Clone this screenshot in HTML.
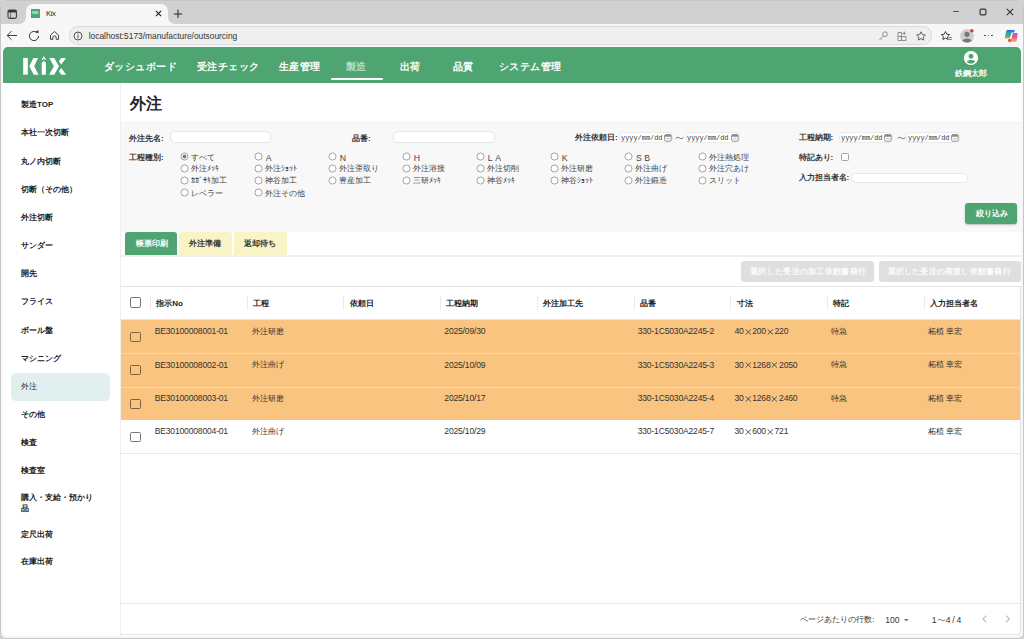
<!DOCTYPE html>
<html><head><meta charset="utf-8">
<style>
*{box-sizing:border-box;margin:0;padding:0}
html,body{width:1024px;height:639px;overflow:hidden;background:#d4d4d4;font-family:"Liberation Sans",sans-serif;position:relative}
.a{position:absolute}
.t{position:absolute;white-space:nowrap}
svg{display:block}
</style></head><body>
<div class="a" style="left:0px;top:0px;width:1024px;height:639px;background:#f7f7f7;border-radius:7px 7px 6px 6px;border:1px solid #c6c6c6"></div>
<div class="a" style="left:1px;top:1px;width:1022px;height:23px;background:#d1d1d1;border-radius:6px 6px 0 0"></div>
<div class="a" style="left:26px;top:4px;width:142px;height:20px;background:#f7f7f7;border-radius:7px 7px 0 0"></div>
<svg class="a" style="left:18px;top:16px" width="160" height="8"><path d="M0 8 Q8 8 8 0 L8 8Z M150 0 Q150 8 158 8 L150 8Z" fill="#f7f7f7"/></svg>
<svg class="a" style="left:7px;top:8.6px" width="10.5" height="10.5"><rect x="1" y="1" width="8.4" height="8.4" rx="1.6" fill="none" stroke="#3a3a3a" stroke-width="1.1"/><rect x="1" y="1" width="8.4" height="2.6" rx="1" fill="#3a3a3a"/><line x1="3.6" y1="3.4" x2="3.6" y2="9.4" stroke="#555" stroke-width="0.8"/></svg>
<div class="a" style="left:30.5px;top:8.9px;width:9.5px;height:9.1px;background:#4ea571"></div>
<div class="t" style="left:30.5px;top:11px;width:9.5px;font-size:3.6px;line-height:5px;color:#e8f5ec;text-align:center;font-weight:bold">KIX</div>
<div class="t" style="left:46px;top:8.60px;font-size:7.6px;line-height:10px;font-weight:normal;color:#222;letter-spacing:-0.35px">Kix</div>
<svg class="a" style="left:154.8px;top:10px" width="7" height="7"><path d="M0.9 0.9L6.1 6.1M6.1 0.9L0.9 6.1" stroke="#222" stroke-width="1.2"/></svg>
<svg class="a" style="left:172.5px;top:8.5px" width="10" height="10"><path d="M5 0.5V9M0.8 5H9.2" stroke="#222" stroke-width="1"/></svg>
<div class="a" style="left:953.3px;top:11.2px;width:5.400000000000091px;height:1.3000000000000007px;background:#555"></div>
<svg class="a" style="left:979px;top:8px" width="8" height="8"><rect x="1.1" y="1.1" width="5.8" height="5.8" rx="1.2" fill="none" stroke="#333" stroke-width="1.2"/></svg>
<svg class="a" style="left:1005.8px;top:8px" width="8" height="8"><path d="M0.8 0.8L7.2 7.2M7.2 0.8L0.8 7.2" stroke="#333" stroke-width="1.1"/></svg>
<svg class="a" style="left:5px;top:29px" width="14" height="14"><path d="M12 6.5H2.2M6.6 2.1L2.2 6.5L6.6 10.9" fill="none" stroke="#333" stroke-width="0.95"/></svg>
<svg class="a" style="left:26.5px;top:28.6px" width="14" height="14"><path d="M11.6 7A4.6 4.6 0 1 1 10.2 3.7" fill="none" stroke="#333" stroke-width="1"/><path d="M8 3.2L11.6 3.9L11.4 0.9Z" fill="#333"/></svg>
<svg class="a" style="left:47px;top:28px" width="14" height="14"><path d="M3.5 7.2L7.5 3.4L11.5 7.2V11.3H9.1V9.3Q9.1 7.9 7.5 7.9Q5.9 7.9 5.9 9.3V11.3H3.5Z" fill="none" stroke="#333" stroke-width="0.95" stroke-linejoin="round"/></svg>
<div class="a" style="left:69px;top:26px;width:863px;height:19px;background:#efefef;border:1px solid #dadada;border-radius:9px"></div>
<svg class="a" style="left:73px;top:30.5px" width="10" height="10"><circle cx="5" cy="5" r="4" fill="none" stroke="#555" stroke-width="1"/><line x1="5" y1="4" x2="5" y2="7.5" stroke="#555" stroke-width="1"/><circle cx="5" cy="2.7" r="0.6" fill="#555"/></svg>
<div class="t" style="left:88.7px;top:31.40px;font-size:8.4px;line-height:10px;font-weight:normal;color:#333;">localhost:5173/manufacture/outsourcing</div>
<svg class="a" style="left:877px;top:30px" width="12" height="12"><circle cx="8" cy="4.2" r="2.4" fill="none" stroke="#888" stroke-width="0.9"/><path d="M6.3 5.9L2.5 9.7M3.6 8.6L4.7 9.7" fill="none" stroke="#888" stroke-width="0.9"/></svg>
<svg class="a" style="left:896px;top:29.5px" width="13" height="13"><path d="M2 2.5H5.5V10.5H2ZM5.5 6.5H10V10.5H5.5ZM2 6.5H5.5" fill="none" stroke="#808080" stroke-width="0.85"/><path d="M8.2 1.5V5M6.6 3.3H9.8" stroke="#808080" stroke-width="0.85"/></svg>
<svg class="a" style="left:913.5px;top:29.5px" width="14" height="12"><path d="M7 1.8L8.35 4.6L11.4 5L9.15 7.1L9.75 10.1L7 8.6L4.25 10.1L4.85 7.1L2.6 5L5.65 4.6Z" fill="none" stroke="#555" stroke-width="0.9" stroke-linejoin="round"/></svg>
<svg class="a" style="left:940px;top:29.5px" width="13" height="12"><path d="M5.5 1.5L6.8 4.2L9.7 4.6L7.6 6.6L8.1 9.5L5.5 8.1L2.9 9.5L3.4 6.6L1.3 4.6L4.2 4.2Z" fill="none" stroke="#333" stroke-width="0.95" stroke-linejoin="round"/><path d="M8.8 7.6H11.8M8.8 9.4H11.8" stroke="#666" stroke-width="0.9"/></svg>
<svg class="a" style="left:959px;top:28px" width="16" height="16"><circle cx="8" cy="8" r="7" fill="#cfcfcf"/><circle cx="8" cy="6.3" r="2.6" fill="#777"/><path d="M3.2 12.6A5.5 4 0 0 1 12.8 12.6A7 7 0 0 1 3.2 12.6Z" fill="#777"/><circle cx="12.8" cy="2.8" r="1.8" fill="#e53935"/></svg>
<div class="a" style="left:984.2px;top:34.6px;width:1.7999999999999545px;height:1.7999999999999972px;background:#444;border-radius:0.6px"></div>
<div class="a" style="left:987.6px;top:34.6px;width:1.7999999999999545px;height:1.7999999999999972px;background:#444;border-radius:0.6px"></div>
<div class="a" style="left:991px;top:34.6px;width:1.7999999999999545px;height:1.7999999999999972px;background:#444;border-radius:0.6px"></div>
<svg class="a" style="left:1003.5px;top:29px" width="15" height="14"><defs><linearGradient id="cg1" x1="0" y1="0" x2="0" y2="1"><stop offset="0" stop-color="#2563e0"/><stop offset="0.35" stop-color="#2fa0c8"/><stop offset="0.7" stop-color="#4bb464"/><stop offset="1" stop-color="#d2c21c"/></linearGradient><linearGradient id="cg2" x1="0" y1="0" x2="0" y2="1"><stop offset="0" stop-color="#c44fd0"/><stop offset="0.55" stop-color="#e0609a"/><stop offset="0.75" stop-color="#f7915a"/><stop offset="1" stop-color="#f8a058"/></linearGradient></defs><path d="M3.4 0.9H9.6Q11 0.9 10.6 2.2L10.2 3.4H7.6L5.8 9.6H1.8Q0.6 9.6 0.8 8.4L2.3 2Q2.6 0.9 3.4 0.9Z" fill="url(#cg1)"/><path d="M11.6 12.7H5.2Q4 12.7 4.3 11.5L4.6 10.2H7.3L8.9 4.1H12.6Q13.8 4.1 13.6 5.3L12.7 11.5Q12.5 12.7 11.6 12.7Z" fill="url(#cg2)"/><circle cx="5.6" cy="11.4" r="1.4" fill="#e53d3a"/></svg>
<div class="a" style="left:3px;top:47px;width:1018px;height:588.5px;background:#fff;border-radius:5px 5px 5px 5px;overflow:hidden"></div>
<div class="a" style="left:3px;top:47px;width:1018px;height:35.5px;background:#4ea571;border-radius:5px 5px 0 0"></div>
<svg class="a" style="left:20px;top:52px" width="50" height="26"><g fill="#fff"><rect x="3.2" y="5.9" width="4.6" height="16.8"/><path d="M13.4 5.9H18.1L14.2 14.3L18.6 22.7H13.7L9.3 14.3Z"/><path d="M21.7 22.7V10.4L23.8 9L25.9 10.4V22.7Z"/><path d="M21.5 8L23.8 3.9L26.1 8H24.8L23.8 6.2L22.8 8Z"/><path d="M29.3 5.9H34.2L39 14.3L34.2 22.7H29.1L33.9 14.3Z"/><path d="M41 5.9H45.9L41.3 12.5L38.9 9.5Z"/><path d="M38.9 19.1L41.3 16.1L46.1 22.7H41.2Z"/></g></svg>
<div class="t" style="left:104px;top:60.00px;font-size:10.4px;line-height:13px;font-weight:bold;color:#fff;letter-spacing:0.45px">ダッシュボード</div>
<div class="t" style="left:197px;top:60.00px;font-size:10.4px;line-height:13px;font-weight:bold;color:#fff;letter-spacing:0.45px">受注チェック</div>
<div class="t" style="left:279px;top:60.00px;font-size:10.4px;line-height:13px;font-weight:bold;color:#fff;letter-spacing:0.45px">生産管理</div>
<div class="t" style="left:346px;top:60.00px;font-size:10.4px;line-height:13px;font-weight:bold;color:#b8dcc3;letter-spacing:0.45px">製造</div>
<div class="t" style="left:400px;top:60.00px;font-size:10.4px;line-height:13px;font-weight:bold;color:#fff;letter-spacing:0.45px">出荷</div>
<div class="t" style="left:453px;top:60.00px;font-size:10.4px;line-height:13px;font-weight:bold;color:#fff;letter-spacing:0.45px">品質</div>
<div class="t" style="left:499px;top:60.00px;font-size:10.4px;line-height:13px;font-weight:bold;color:#fff;letter-spacing:0.45px">システム管理</div>
<div class="a" style="left:330.5px;top:78px;width:52.5px;height:1.5999999999999943px;background:#fff;border-radius:1px"></div>
<svg class="a" style="left:961.8px;top:49.2px" width="18" height="18" viewBox="0 0 24 24"><g transform="translate(12 12) scale(0.94) translate(-12 -12)"><path fill="#fff" d="M12 2C6.48 2 2 6.48 2 12s4.48 10 10 10 10-4.48 10-10S17.52 2 12 2zm0 4c1.93 0 3.5 1.57 3.5 3.5S13.93 13 12 13s-3.5-1.57-3.5-3.5S10.07 6 12 6zm0 14c-2.03 0-4.43-.82-6.14-2.88C7.55 15.8 9.68 15 12 15s4.45.8 6.14 2.12C16.43 19.18 14.03 20 12 20z"/></g></svg>
<div class="t" style="left:954.5px;top:68.70px;font-size:8px;line-height:10px;font-weight:bold;color:#fff;">鉄鋼太郎</div>
<div class="a" style="left:119.8px;top:82.5px;width:1.4000000000000057px;height:553.0px;background:#eeeeee"></div>
<div class="t" style="left:21px;top:100.30px;font-size:8px;line-height:10px;font-weight:bold;color:#222;">製造TOP</div>
<div class="t" style="left:21px;top:128.45px;font-size:8px;line-height:10px;font-weight:bold;color:#222;">本社一次切断</div>
<div class="t" style="left:21px;top:156.60px;font-size:8px;line-height:10px;font-weight:bold;color:#222;">丸ノ内切断</div>
<div class="t" style="left:21px;top:184.75px;font-size:8px;line-height:10px;font-weight:bold;color:#222;">切断（その他）</div>
<div class="t" style="left:21px;top:212.90px;font-size:8px;line-height:10px;font-weight:bold;color:#222;">外注切断</div>
<div class="t" style="left:21px;top:241.05px;font-size:8px;line-height:10px;font-weight:bold;color:#222;">サンダー</div>
<div class="t" style="left:21px;top:269.20px;font-size:8px;line-height:10px;font-weight:bold;color:#222;">開先</div>
<div class="t" style="left:21px;top:297.35px;font-size:8px;line-height:10px;font-weight:bold;color:#222;">フライス</div>
<div class="t" style="left:21px;top:325.50px;font-size:8px;line-height:10px;font-weight:bold;color:#222;">ボール盤</div>
<div class="t" style="left:21px;top:353.65px;font-size:8px;line-height:10px;font-weight:bold;color:#222;">マシニング</div>
<div class="a" style="left:11.3px;top:372.5px;width:99.0px;height:28.19999999999999px;background:#e2efef;border-radius:5px"></div>
<div class="t" style="left:21px;top:381.80px;font-size:8px;line-height:10px;font-weight:normal;color:#1e1e1e;">外注</div>
<div class="t" style="left:21px;top:409.95px;font-size:8px;line-height:10px;font-weight:bold;color:#222;">その他</div>
<div class="t" style="left:21px;top:438.10px;font-size:8px;line-height:10px;font-weight:bold;color:#222;">検査</div>
<div class="t" style="left:21px;top:466.25px;font-size:8px;line-height:10px;font-weight:bold;color:#222;">検査室</div>
<div class="t" style="left:21px;top:492.80px;font-size:8px;line-height:10px;font-weight:bold;color:#222;">購入・支給・預かり</div>
<div class="t" style="left:21px;top:504.00px;font-size:8px;line-height:10px;font-weight:bold;color:#222;">品</div>
<div class="t" style="left:21px;top:529.60px;font-size:8px;line-height:10px;font-weight:bold;color:#222;">定尺出荷</div>
<div class="t" style="left:21px;top:557.40px;font-size:8px;line-height:10px;font-weight:bold;color:#222;">在庫出荷</div>
<div class="t" style="left:129.7px;top:94.40px;font-size:16px;line-height:20px;font-weight:bold;color:#262626;">外注</div>
<div class="a" style="left:121px;top:122px;width:900px;height:110.19999999999999px;background:#f8f8f8;border-top:1.6px solid #f0f0f0"></div>
<div class="t" style="left:129px;top:133.80px;font-size:8px;line-height:10px;font-weight:bold;color:#333;">外注先名:</div>
<div class="a" style="left:170px;top:131.4px;width:101.19999999999999px;height:11.400000000000006px;background:#fff;border:1px solid #e6e6e6;border-radius:4.5px"></div>
<div class="t" style="left:352px;top:133.80px;font-size:8px;line-height:10px;font-weight:bold;color:#333;">品番:</div>
<div class="a" style="left:393px;top:131.4px;width:101.69999999999999px;height:11.400000000000006px;background:#fff;border:1px solid #e6e6e6;border-radius:4.5px"></div>
<div class="t" style="left:575px;top:133.20px;font-size:8px;line-height:10px;font-weight:bold;color:#333;">外注依頼日:</div>
<div class="a" style="left:619px;top:132.4px;width:54px;height:10.699999999999989px;background:#fff;border:1px solid #ebebeb;border-radius:4px"></div>
<div class="t" style="left:620.8px;top:134.1px;font-family:'Liberation Mono',monospace;font-size:7.6px;line-height:9px;color:#333;transform:scaleX(0.91);transform-origin:0 0">yyyy/mm/dd</div>
<svg class="a" style="left:664px;top:133.5px" width="8" height="8"><rect x="0.6" y="0.6" width="6.6" height="6.6" rx="1.3" fill="none" stroke="#8a8a8a" stroke-width="0.9"/><rect x="0.6" y="0.6" width="6.6" height="2.2" rx="1" fill="#8a8a8a"/><rect x="2" y="4.4" width="3.8" height="0.8" fill="#aaa"/></svg>
<svg class="a" style="left:675px;top:135px" width="9" height="6"><path d="M0.7 3.5C1.9 2.1 3.2 2.1 4.5 3C5.8 3.9 7.1 3.9 8.3 2.5" fill="none" stroke="#444" stroke-width="0.8"/></svg>
<div class="a" style="left:685.5px;top:132.4px;width:54.0px;height:10.699999999999989px;background:#fff;border:1px solid #ebebeb;border-radius:4px"></div>
<div class="t" style="left:687.3px;top:134.1px;font-family:'Liberation Mono',monospace;font-size:7.6px;line-height:9px;color:#333;transform:scaleX(0.91);transform-origin:0 0">yyyy/mm/dd</div>
<svg class="a" style="left:730.5px;top:133.5px" width="8" height="8"><rect x="0.6" y="0.6" width="6.6" height="6.6" rx="1.3" fill="none" stroke="#8a8a8a" stroke-width="0.9"/><rect x="0.6" y="0.6" width="6.6" height="2.2" rx="1" fill="#8a8a8a"/><rect x="2" y="4.4" width="3.8" height="0.8" fill="#aaa"/></svg>
<div class="t" style="left:798.6px;top:133.20px;font-size:8px;line-height:10px;font-weight:bold;color:#333;">工程納期:</div>
<div class="a" style="left:839px;top:132.4px;width:54px;height:10.699999999999989px;background:#fff;border:1px solid #ebebeb;border-radius:4px"></div>
<div class="t" style="left:840.8px;top:134.1px;font-family:'Liberation Mono',monospace;font-size:7.6px;line-height:9px;color:#333;transform:scaleX(0.91);transform-origin:0 0">yyyy/mm/dd</div>
<svg class="a" style="left:884px;top:133.5px" width="8" height="8"><rect x="0.6" y="0.6" width="6.6" height="6.6" rx="1.3" fill="none" stroke="#8a8a8a" stroke-width="0.9"/><rect x="0.6" y="0.6" width="6.6" height="2.2" rx="1" fill="#8a8a8a"/><rect x="2" y="4.4" width="3.8" height="0.8" fill="#aaa"/></svg>
<svg class="a" style="left:897px;top:135px" width="9" height="6"><path d="M0.7 3.5C1.9 2.1 3.2 2.1 4.5 3C5.8 3.9 7.1 3.9 8.3 2.5" fill="none" stroke="#444" stroke-width="0.8"/></svg>
<div class="a" style="left:906px;top:132.4px;width:54px;height:10.699999999999989px;background:#fff;border:1px solid #ebebeb;border-radius:4px"></div>
<div class="t" style="left:907.8px;top:134.1px;font-family:'Liberation Mono',monospace;font-size:7.6px;line-height:9px;color:#333;transform:scaleX(0.91);transform-origin:0 0">yyyy/mm/dd</div>
<svg class="a" style="left:951px;top:133.5px" width="8" height="8"><rect x="0.6" y="0.6" width="6.6" height="6.6" rx="1.3" fill="none" stroke="#8a8a8a" stroke-width="0.9"/><rect x="0.6" y="0.6" width="6.6" height="2.2" rx="1" fill="#8a8a8a"/><rect x="2" y="4.4" width="3.8" height="0.8" fill="#aaa"/></svg>
<div class="t" style="left:129px;top:153.00px;font-size:8px;line-height:10px;font-weight:bold;color:#333;">工程種別:</div>
<svg class="a" style="left:179.90px;top:152.30px" width="9" height="9"><circle cx="4.5" cy="4.5" r="3.55" fill="#fff" stroke="#9a9a9a" stroke-width="0.9"/><circle cx="4.5" cy="4.5" r="1.9" fill="#777"/></svg>
<div class="t" style="left:190.6px;top:152.60px;font-size:8px;line-height:10px;font-weight:normal;color:#444;">すべて</div>
<svg class="a" style="left:253.95px;top:152.30px" width="9" height="9"><circle cx="4.5" cy="4.5" r="3.55" fill="#fff" stroke="#9a9a9a" stroke-width="0.9"/></svg>
<div class="t" style="left:265.65px;top:153.00px;font-size:8.7px;line-height:10px;font-weight:normal;color:#444;letter-spacing:2.6px">A</div>
<svg class="a" style="left:328.00px;top:152.30px" width="9" height="9"><circle cx="4.5" cy="4.5" r="3.55" fill="#fff" stroke="#9a9a9a" stroke-width="0.9"/></svg>
<div class="t" style="left:339.7px;top:153.00px;font-size:8.7px;line-height:10px;font-weight:normal;color:#444;letter-spacing:2.6px">N</div>
<svg class="a" style="left:402.05px;top:152.30px" width="9" height="9"><circle cx="4.5" cy="4.5" r="3.55" fill="#fff" stroke="#9a9a9a" stroke-width="0.9"/></svg>
<div class="t" style="left:413.74999999999994px;top:153.00px;font-size:8.7px;line-height:10px;font-weight:normal;color:#444;letter-spacing:2.6px">H</div>
<svg class="a" style="left:476.10px;top:152.30px" width="9" height="9"><circle cx="4.5" cy="4.5" r="3.55" fill="#fff" stroke="#9a9a9a" stroke-width="0.9"/></svg>
<div class="t" style="left:487.8px;top:153.00px;font-size:8.7px;line-height:10px;font-weight:normal;color:#444;letter-spacing:2.6px">LA</div>
<svg class="a" style="left:550.15px;top:152.30px" width="9" height="9"><circle cx="4.5" cy="4.5" r="3.55" fill="#fff" stroke="#9a9a9a" stroke-width="0.9"/></svg>
<div class="t" style="left:561.85px;top:153.00px;font-size:8.7px;line-height:10px;font-weight:normal;color:#444;letter-spacing:2.6px">K</div>
<svg class="a" style="left:624.20px;top:152.30px" width="9" height="9"><circle cx="4.5" cy="4.5" r="3.55" fill="#fff" stroke="#9a9a9a" stroke-width="0.9"/></svg>
<div class="t" style="left:635.9px;top:153.00px;font-size:8.7px;line-height:10px;font-weight:normal;color:#444;letter-spacing:2.6px">SB</div>
<svg class="a" style="left:698.25px;top:152.30px" width="9" height="9"><circle cx="4.5" cy="4.5" r="3.55" fill="#fff" stroke="#9a9a9a" stroke-width="0.9"/></svg>
<div class="t" style="left:708.95px;top:152.60px;font-size:8px;line-height:10px;font-weight:normal;color:#444;">外注熱処理</div>
<svg class="a" style="left:179.90px;top:164.00px" width="9" height="9"><circle cx="4.5" cy="4.5" r="3.55" fill="#fff" stroke="#9a9a9a" stroke-width="0.9"/></svg>
<div class="t" style="left:190.6px;top:164.30px;font-size:8px;line-height:10px;font-weight:normal;color:#444;">外注ﾒｯｷ</div>
<svg class="a" style="left:253.95px;top:164.00px" width="9" height="9"><circle cx="4.5" cy="4.5" r="3.55" fill="#fff" stroke="#9a9a9a" stroke-width="0.9"/></svg>
<div class="t" style="left:264.65px;top:164.30px;font-size:8px;line-height:10px;font-weight:normal;color:#444;">外注ｼｮｯﾄ</div>
<svg class="a" style="left:328.00px;top:164.00px" width="9" height="9"><circle cx="4.5" cy="4.5" r="3.55" fill="#fff" stroke="#9a9a9a" stroke-width="0.9"/></svg>
<div class="t" style="left:338.7px;top:164.30px;font-size:8px;line-height:10px;font-weight:normal;color:#444;">外注歪取り</div>
<svg class="a" style="left:402.05px;top:164.00px" width="9" height="9"><circle cx="4.5" cy="4.5" r="3.55" fill="#fff" stroke="#9a9a9a" stroke-width="0.9"/></svg>
<div class="t" style="left:412.74999999999994px;top:164.30px;font-size:8px;line-height:10px;font-weight:normal;color:#444;">外注溶接</div>
<svg class="a" style="left:476.10px;top:164.00px" width="9" height="9"><circle cx="4.5" cy="4.5" r="3.55" fill="#fff" stroke="#9a9a9a" stroke-width="0.9"/></svg>
<div class="t" style="left:486.8px;top:164.30px;font-size:8px;line-height:10px;font-weight:normal;color:#444;">外注切削</div>
<svg class="a" style="left:550.15px;top:164.00px" width="9" height="9"><circle cx="4.5" cy="4.5" r="3.55" fill="#fff" stroke="#9a9a9a" stroke-width="0.9"/></svg>
<div class="t" style="left:560.85px;top:164.30px;font-size:8px;line-height:10px;font-weight:normal;color:#444;">外注研磨</div>
<svg class="a" style="left:624.20px;top:164.00px" width="9" height="9"><circle cx="4.5" cy="4.5" r="3.55" fill="#fff" stroke="#9a9a9a" stroke-width="0.9"/></svg>
<div class="t" style="left:634.9px;top:164.30px;font-size:8px;line-height:10px;font-weight:normal;color:#444;">外注曲げ</div>
<svg class="a" style="left:698.25px;top:164.00px" width="9" height="9"><circle cx="4.5" cy="4.5" r="3.55" fill="#fff" stroke="#9a9a9a" stroke-width="0.9"/></svg>
<div class="t" style="left:708.95px;top:164.30px;font-size:8px;line-height:10px;font-weight:normal;color:#444;">外注穴あけ</div>
<svg class="a" style="left:179.90px;top:175.80px" width="9" height="9"><circle cx="4.5" cy="4.5" r="3.55" fill="#fff" stroke="#9a9a9a" stroke-width="0.9"/></svg>
<div class="t" style="left:190.6px;top:176.10px;font-size:8px;line-height:10px;font-weight:normal;color:#444;">ｶｶﾞｻｷ加工</div>
<svg class="a" style="left:253.95px;top:175.80px" width="9" height="9"><circle cx="4.5" cy="4.5" r="3.55" fill="#fff" stroke="#9a9a9a" stroke-width="0.9"/></svg>
<div class="t" style="left:264.65px;top:176.10px;font-size:8px;line-height:10px;font-weight:normal;color:#444;">神谷加工</div>
<svg class="a" style="left:328.00px;top:175.80px" width="9" height="9"><circle cx="4.5" cy="4.5" r="3.55" fill="#fff" stroke="#9a9a9a" stroke-width="0.9"/></svg>
<div class="t" style="left:338.7px;top:176.10px;font-size:8px;line-height:10px;font-weight:normal;color:#444;">豊産加工</div>
<svg class="a" style="left:402.05px;top:175.80px" width="9" height="9"><circle cx="4.5" cy="4.5" r="3.55" fill="#fff" stroke="#9a9a9a" stroke-width="0.9"/></svg>
<div class="t" style="left:412.74999999999994px;top:176.10px;font-size:8px;line-height:10px;font-weight:normal;color:#444;">三研ﾒｯｷ</div>
<svg class="a" style="left:476.10px;top:175.80px" width="9" height="9"><circle cx="4.5" cy="4.5" r="3.55" fill="#fff" stroke="#9a9a9a" stroke-width="0.9"/></svg>
<div class="t" style="left:486.8px;top:176.10px;font-size:8px;line-height:10px;font-weight:normal;color:#444;">神谷ﾒｯｷ</div>
<svg class="a" style="left:550.15px;top:175.80px" width="9" height="9"><circle cx="4.5" cy="4.5" r="3.55" fill="#fff" stroke="#9a9a9a" stroke-width="0.9"/></svg>
<div class="t" style="left:560.85px;top:176.10px;font-size:8px;line-height:10px;font-weight:normal;color:#444;">神谷ｼｮｯﾄ</div>
<svg class="a" style="left:624.20px;top:175.80px" width="9" height="9"><circle cx="4.5" cy="4.5" r="3.55" fill="#fff" stroke="#9a9a9a" stroke-width="0.9"/></svg>
<div class="t" style="left:634.9px;top:176.10px;font-size:8px;line-height:10px;font-weight:normal;color:#444;">外注鍛造</div>
<svg class="a" style="left:698.25px;top:175.80px" width="9" height="9"><circle cx="4.5" cy="4.5" r="3.55" fill="#fff" stroke="#9a9a9a" stroke-width="0.9"/></svg>
<div class="t" style="left:708.95px;top:176.10px;font-size:8px;line-height:10px;font-weight:normal;color:#444;">スリット</div>
<svg class="a" style="left:179.90px;top:188.30px" width="9" height="9"><circle cx="4.5" cy="4.5" r="3.55" fill="#fff" stroke="#9a9a9a" stroke-width="0.9"/></svg>
<div class="t" style="left:190.6px;top:188.60px;font-size:8px;line-height:10px;font-weight:normal;color:#444;">レベラー</div>
<svg class="a" style="left:253.95px;top:188.30px" width="9" height="9"><circle cx="4.5" cy="4.5" r="3.55" fill="#fff" stroke="#9a9a9a" stroke-width="0.9"/></svg>
<div class="t" style="left:264.65px;top:188.60px;font-size:8px;line-height:10px;font-weight:normal;color:#444;">外注その他</div>
<div class="t" style="left:798.6px;top:152.90px;font-size:8px;line-height:10px;font-weight:bold;color:#333;">特記あり:</div>
<div class="a" style="left:841.2px;top:153.2px;width:7.7999999999999545px;height:7.600000000000023px;background:#fff;border:1.1px solid #a6a6a6;border-radius:1.5px"></div>
<div class="t" style="left:798.6px;top:173.30px;font-size:8px;line-height:10px;font-weight:bold;color:#333;">入力担当者名:</div>
<div class="a" style="left:851px;top:172.7px;width:116.5px;height:10.700000000000017px;background:#fff;border:1px solid #e6e6e6;border-radius:4.5px"></div>
<div class="a" style="left:965.4px;top:203.1px;width:51.200000000000045px;height:20.80000000000001px;background:#4ea571;border-radius:3px;box-shadow:0 1px 2px rgba(0,0,0,.25)"></div>
<div class="t" style="left:976px;top:209.20px;font-size:8px;line-height:10px;font-weight:bold;color:#fff;">絞り込み</div>
<div class="a" style="left:124.5px;top:232.2px;width:52.69999999999999px;height:22.80000000000001px;background:#4ea571;border-radius:3px 3px 0 0"></div>
<div class="t" style="left:135.5px;top:238.60px;font-size:8px;line-height:10px;font-weight:bold;color:#fff;">帳票印刷</div>
<div class="a" style="left:179.2px;top:232.2px;width:52.70000000000002px;height:22.80000000000001px;background:#f8f4c6;border-radius:3px 3px 0 0"></div>
<div class="t" style="left:189px;top:238.50px;font-size:8px;line-height:10px;font-weight:bold;color:#333;">外注準備</div>
<div class="a" style="left:233.6px;top:232.2px;width:53.099999999999994px;height:22.80000000000001px;background:#f8f4c6;border-radius:3px 3px 0 0"></div>
<div class="t" style="left:243.5px;top:238.50px;font-size:8px;line-height:10px;font-weight:bold;color:#333;">返却待ち</div>
<div class="a" style="left:121px;top:255px;width:900px;height:2px;background:#f0f0f0"></div>
<div class="a" style="left:741px;top:260.8px;width:133.39999999999998px;height:21.0px;background:#dfdfdf;border-radius:3px"></div>
<div class="t" style="left:750.2px;top:266.60px;font-size:8.2px;line-height:10px;font-weight:bold;color:#fcfcfc;letter-spacing:0.28px">選択した受注の加工依頼書発行</div>
<div class="a" style="left:878.7px;top:260.8px;width:142.0999999999999px;height:21.0px;background:#dfdfdf;border-radius:3px"></div>
<div class="t" style="left:887.5px;top:266.60px;font-size:8.2px;line-height:10px;font-weight:bold;color:#fcfcfc;letter-spacing:0.22px">選択した受注の荷渡し依頼書発行</div>
<div class="a" style="left:121px;top:286px;width:899.5px;height:348.5px;border:1px solid #e4e4e4;border-radius:0 0 4px 0;border-left:none"></div>
<div class="a" style="left:130.2px;top:297.4px;width:10.800000000000011px;height:10.5px;border:1.7px solid #777;border-radius:2px"></div>
<div class="a" style="left:150.0px;top:295.8px;width:1.0px;height:13.899999999999977px;background:#ebebeb"></div>
<div class="t" style="left:156.3px;top:298.60px;font-size:8px;line-height:10px;font-weight:bold;color:#222;">指示No</div>
<div class="a" style="left:246.7px;top:295.8px;width:1.0px;height:13.899999999999977px;background:#ebebeb"></div>
<div class="t" style="left:253.0px;top:298.60px;font-size:8px;line-height:10px;font-weight:bold;color:#222;">工程</div>
<div class="a" style="left:343.4px;top:295.8px;width:1.0px;height:13.899999999999977px;background:#ebebeb"></div>
<div class="t" style="left:349.7px;top:298.60px;font-size:8px;line-height:10px;font-weight:bold;color:#222;">依頼日</div>
<div class="a" style="left:440.1px;top:295.8px;width:1.0px;height:13.899999999999977px;background:#ebebeb"></div>
<div class="t" style="left:446.40000000000003px;top:298.60px;font-size:8px;line-height:10px;font-weight:bold;color:#222;">工程納期</div>
<div class="a" style="left:536.8px;top:295.8px;width:1.0px;height:13.899999999999977px;background:#ebebeb"></div>
<div class="t" style="left:543.0999999999999px;top:298.60px;font-size:8px;line-height:10px;font-weight:bold;color:#222;">外注加工先</div>
<div class="a" style="left:633.5px;top:295.8px;width:1.0px;height:13.899999999999977px;background:#ebebeb"></div>
<div class="t" style="left:639.8px;top:298.60px;font-size:8px;line-height:10px;font-weight:bold;color:#222;">品番</div>
<div class="a" style="left:730.2px;top:295.8px;width:1.0px;height:13.899999999999977px;background:#ebebeb"></div>
<div class="t" style="left:736.5px;top:298.60px;font-size:8px;line-height:10px;font-weight:bold;color:#222;">寸法</div>
<div class="a" style="left:826.9px;top:295.8px;width:1.0px;height:13.899999999999977px;background:#ebebeb"></div>
<div class="t" style="left:833.1999999999999px;top:298.60px;font-size:8px;line-height:10px;font-weight:bold;color:#222;">特記</div>
<div class="a" style="left:923.6px;top:295.8px;width:1.0px;height:13.899999999999977px;background:#ebebeb"></div>
<div class="t" style="left:929.9px;top:298.60px;font-size:8px;line-height:10px;font-weight:bold;color:#222;">入力担当者名</div>
<div class="a" style="left:121px;top:319px;width:899px;height:1px;background:#e6e6e6"></div>
<div class="a" style="left:121px;top:320px;width:899px;height:100px;background:#f9c47f"></div>
<div class="a" style="left:121px;top:353px;width:899px;height:1px;background:#f4d6b0"></div>
<div class="a" style="left:121px;top:386.5px;width:899px;height:1.0px;background:#f4d6b0"></div>
<div class="a" style="left:121px;top:452.5px;width:899px;height:1.0px;background:#e8e8e8"></div>
<div class="a" style="left:130.2px;top:331.8px;width:10.800000000000011px;height:10.0px;border:1.7px solid #7d6242;border-radius:1.5px"></div>
<div class="t" style="left:154.7px;top:326.20px;font-size:8.6px;line-height:10px;font-weight:normal;color:#333;letter-spacing:-0.2px">BE30100008001-01</div>
<div class="t" style="left:251.6px;top:326.90px;font-size:8px;line-height:10px;font-weight:normal;color:#333;">外注研磨</div>
<div class="t" style="left:444.3px;top:326.20px;font-size:8.6px;line-height:10px;font-weight:normal;color:#333;letter-spacing:-0.2px">2025/09/30</div>
<div class="t" style="left:637.7px;top:326.20px;font-size:8.6px;line-height:10px;font-weight:normal;color:#333;letter-spacing:-0.2px">330-1C5030A2245-2</div>
<div class="t" style="left:734.4px;top:326.20px;font-size:8.6px;line-height:10px;font-weight:normal;color:#333;letter-spacing:-0.2px">40<svg width="8.6" height="6" style="display:inline-block;vertical-align:-0.6px"><path d="M1.6 0.4L7 5.6M7 0.4L1.6 5.6" stroke="#3a3a3a" stroke-width="0.85"/></svg>200<svg width="8.6" height="6" style="display:inline-block;vertical-align:-0.6px"><path d="M1.6 0.4L7 5.6M7 0.4L1.6 5.6" stroke="#3a3a3a" stroke-width="0.85"/></svg>220</div>
<div class="t" style="left:830.9px;top:326.90px;font-size:8px;line-height:10px;font-weight:normal;color:#333;">特急</div>
<div class="t" style="left:928.2px;top:326.90px;font-size:8px;line-height:10px;font-weight:normal;color:#333;">柘植 幸宏</div>
<div class="a" style="left:130.2px;top:365.2px;width:10.800000000000011px;height:10.0px;border:1.7px solid #7d6242;border-radius:1.5px"></div>
<div class="t" style="left:154.7px;top:359.60px;font-size:8.6px;line-height:10px;font-weight:normal;color:#333;letter-spacing:-0.2px">BE30100008002-01</div>
<div class="t" style="left:251.6px;top:360.30px;font-size:8px;line-height:10px;font-weight:normal;color:#333;">外注曲げ</div>
<div class="t" style="left:444.3px;top:359.60px;font-size:8.6px;line-height:10px;font-weight:normal;color:#333;letter-spacing:-0.2px">2025/10/09</div>
<div class="t" style="left:637.7px;top:359.60px;font-size:8.6px;line-height:10px;font-weight:normal;color:#333;letter-spacing:-0.2px">330-1C5030A2245-3</div>
<div class="t" style="left:734.4px;top:359.60px;font-size:8.6px;line-height:10px;font-weight:normal;color:#333;letter-spacing:-0.2px">30<svg width="8.6" height="6" style="display:inline-block;vertical-align:-0.6px"><path d="M1.6 0.4L7 5.6M7 0.4L1.6 5.6" stroke="#3a3a3a" stroke-width="0.85"/></svg>1268<svg width="8.6" height="6" style="display:inline-block;vertical-align:-0.6px"><path d="M1.6 0.4L7 5.6M7 0.4L1.6 5.6" stroke="#3a3a3a" stroke-width="0.85"/></svg>2050</div>
<div class="t" style="left:830.9px;top:360.30px;font-size:8px;line-height:10px;font-weight:normal;color:#333;">特急</div>
<div class="t" style="left:928.2px;top:360.30px;font-size:8px;line-height:10px;font-weight:normal;color:#333;">柘植 幸宏</div>
<div class="a" style="left:130.2px;top:398.7px;width:10.800000000000011px;height:10.0px;border:1.7px solid #7d6242;border-radius:1.5px"></div>
<div class="t" style="left:154.7px;top:393.10px;font-size:8.6px;line-height:10px;font-weight:normal;color:#333;letter-spacing:-0.2px">BE30100008003-01</div>
<div class="t" style="left:251.6px;top:393.80px;font-size:8px;line-height:10px;font-weight:normal;color:#333;">外注研磨</div>
<div class="t" style="left:444.3px;top:393.10px;font-size:8.6px;line-height:10px;font-weight:normal;color:#333;letter-spacing:-0.2px">2025/10/17</div>
<div class="t" style="left:637.7px;top:393.10px;font-size:8.6px;line-height:10px;font-weight:normal;color:#333;letter-spacing:-0.2px">330-1C5030A2245-4</div>
<div class="t" style="left:734.4px;top:393.10px;font-size:8.6px;line-height:10px;font-weight:normal;color:#333;letter-spacing:-0.2px">30<svg width="8.6" height="6" style="display:inline-block;vertical-align:-0.6px"><path d="M1.6 0.4L7 5.6M7 0.4L1.6 5.6" stroke="#3a3a3a" stroke-width="0.85"/></svg>1268<svg width="8.6" height="6" style="display:inline-block;vertical-align:-0.6px"><path d="M1.6 0.4L7 5.6M7 0.4L1.6 5.6" stroke="#3a3a3a" stroke-width="0.85"/></svg>2460</div>
<div class="t" style="left:830.9px;top:393.80px;font-size:8px;line-height:10px;font-weight:normal;color:#333;">特急</div>
<div class="t" style="left:928.2px;top:393.80px;font-size:8px;line-height:10px;font-weight:normal;color:#333;">柘植 幸宏</div>
<div class="a" style="left:130.2px;top:431.8px;width:10.800000000000011px;height:10.0px;border:1.7px solid #777;border-radius:1.5px"></div>
<div class="t" style="left:154.7px;top:426.20px;font-size:8.6px;line-height:10px;font-weight:normal;color:#333;letter-spacing:-0.2px">BE30100008004-01</div>
<div class="t" style="left:251.6px;top:426.90px;font-size:8px;line-height:10px;font-weight:normal;color:#333;">外注曲げ</div>
<div class="t" style="left:444.3px;top:426.20px;font-size:8.6px;line-height:10px;font-weight:normal;color:#333;letter-spacing:-0.2px">2025/10/29</div>
<div class="t" style="left:637.7px;top:426.20px;font-size:8.6px;line-height:10px;font-weight:normal;color:#333;letter-spacing:-0.2px">330-1C5030A2245-7</div>
<div class="t" style="left:734.4px;top:426.20px;font-size:8.6px;line-height:10px;font-weight:normal;color:#333;letter-spacing:-0.2px">30<svg width="8.6" height="6" style="display:inline-block;vertical-align:-0.6px"><path d="M1.6 0.4L7 5.6M7 0.4L1.6 5.6" stroke="#3a3a3a" stroke-width="0.85"/></svg>600<svg width="8.6" height="6" style="display:inline-block;vertical-align:-0.6px"><path d="M1.6 0.4L7 5.6M7 0.4L1.6 5.6" stroke="#3a3a3a" stroke-width="0.85"/></svg>721</div>
<div class="t" style="left:928.2px;top:426.90px;font-size:8px;line-height:10px;font-weight:normal;color:#333;">柘植 幸宏</div>
<div class="a" style="left:121px;top:603px;width:899px;height:1px;background:#e8e8e8"></div>
<div class="t" style="left:800.3px;top:614.80px;font-size:8px;line-height:10px;font-weight:normal;color:#333;">ページあたりの行数:</div>
<div class="t" style="left:885.3px;top:614.60px;font-size:8.6px;line-height:10px;font-weight:normal;color:#333;">100</div>
<svg class="a" style="left:904px;top:618.6px" width="5" height="3"><path d="M0 0H4.6L2.3 2.4Z" fill="#777"/></svg>
<div class="t" style="left:931.8px;top:614.60px;font-size:8.6px;line-height:10px;font-weight:normal;color:#333;">1</div>
<svg class="a" style="left:936.5px;top:617px" width="9" height="6"><path d="M0.7 3.5C1.9 2.1 3.2 2.1 4.5 3C5.8 3.9 7.1 3.9 8.3 2.5" fill="none" stroke="#444" stroke-width="0.8"/></svg>
<div class="t" style="left:945.8px;top:614.60px;font-size:8.6px;line-height:10px;font-weight:normal;color:#333;letter-spacing:-0.3px">4 / 4</div>
<svg class="a" style="left:980.5px;top:614px" width="8" height="10"><path d="M5.4 1.6L2 5L5.4 8.4" fill="none" stroke="#bbb" stroke-width="1.1"/></svg>
<svg class="a" style="left:1004.3px;top:614px" width="8" height="10"><path d="M2 1.6L5.4 5L2 8.4" fill="none" stroke="#bbb" stroke-width="1.1"/></svg>
</body></html>
